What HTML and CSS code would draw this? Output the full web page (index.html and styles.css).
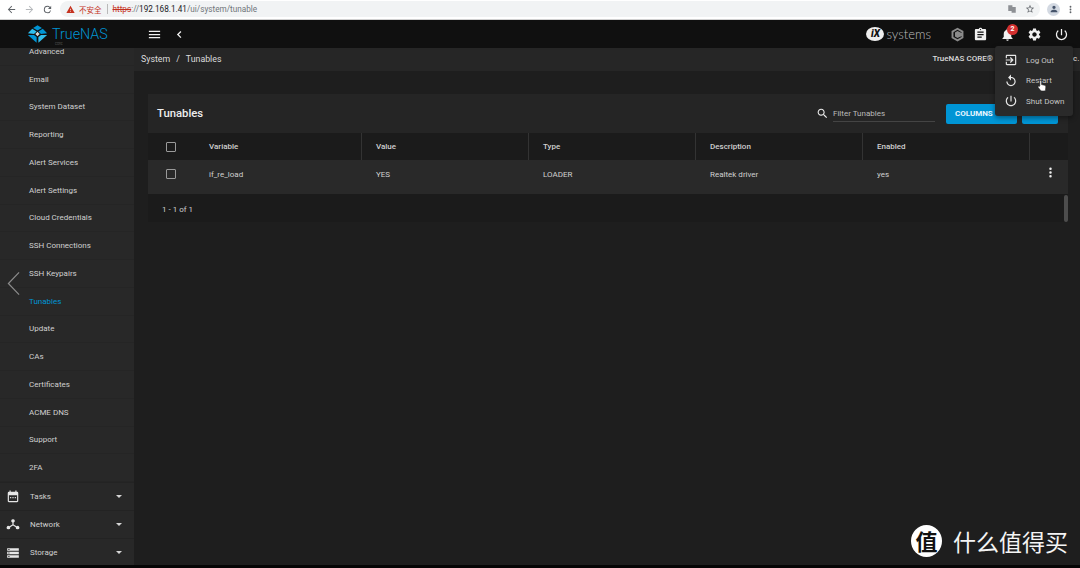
FILE: index.html
```html
<!DOCTYPE html>
<html>
    <head>
        <title>TrueNAS - Tunables</title>
        <link rel="stylesheet" href="styles.css">
    </head>
    <body>
        <div class="chrome">
            <svg class="chrome-ico" viewBox="0 0 24 24"><path d="M20 11H7.8l5.6-5.6L12 4l-8 8 8 8 1.4-1.4L7.8 13H20z"/></svg>
            <svg class="chrome-ico faded" viewBox="0 0 24 24"><path d="M4 11h12.2l-5.6-5.6L12 4l8 8-8 8-1.400-1.400 5.600-5.600H4z"/></svg>
            <svg class="chrome-ico" viewBox="0 0 24 24"><path d="M17.65 6.35A7.96 7.96 0 0 0 12 4a8 8 0 1 0 7.73 10h-2.08A6 6 0 1 1 12 6c1.66 0 3.14.69 4.22 1.78L13 11h7V4z"/></svg>
            <div class="omnibox">
                <svg class="warn" viewBox="0 0 24 24"><path d="M1 21h22L12 2zm12-3h-2v-2h2zm0-4h-2v-4h2z"/></svg>
                <span class="insecure">不安全</span>
                <span class="omni-sep"></span>
                <span class="url"><s class="https">https</s><span class="url-dim">://</span>192.168.1.41<span class="url-dim">/ui/system/tunable</span></span>
                <span class="grow"></span>
                <svg class="omni-ico" viewBox="0 0 24 24"><path d="M3 3h10v14H3zm8 4h10v14H11z" fill="#8d9094"/></svg>
                <svg class="omni-ico" viewBox="0 0 24 24"><path d="M12 15.4l-3.8 2.3 1-4.3-3.3-2.9 4.4-.4L12 6.100l1.700 4 4.400.4-3.300 2.900 1 4.300zM22 9.200l-7.200-.6L12 2 9.200 8.600 2 9.200l5.500 4.700L5.800 21l6.200-3.700 6.200 3.700-1.600-7.100z"/></svg>
            </div>
            <div class="avatar"><svg viewBox="0 0 24 24"><path d="M12 12a4 4 0 1 0 0-8 4 4 0 0 0 0 8zm0 2c-2.700 0-8 1.300-8 4v2h16v-2c0-2.700-5.300-4-8-4z"/></svg></div>
            <svg class="chrome-ico last" viewBox="0 0 24 24"><path d="M12 8a2 2 0 1 0 0-4 2 2 0 0 0 0 4zm0 2a2 2 0 1 0 0 4 2 2 0 0 0 0-4zm0 6a2 2 0 1 0 0 4 2 2 0 0 0 0-4z"/></svg>
        </div>

        <header class="topbar">
            <div class="brand">
                <svg class="brand-mark" viewBox="0 0 24 20"><path d="M12 0l5 3-5 3-5-3z" fill="#0095d5"/><path d="M6 4l5 3-3 3-7-1z" fill="#31beec"/><path d="M18 4l-5 3 3 3 7-1z" fill="#0095d5"/><path d="M12 7.500l2.500 2.500-2.500 2.500L9.500 10z" fill="#d8d8d8"/><path d="M1 11l7 0 3 2.500V20z" fill="#0095d5"/><path d="M23 11l-7 0-3 2.500V20z" fill="#31beec"/></svg>
                <span class="brand-name">TrueNAS<small>CORE</small></span>
            </div>
            <svg class="bar-ico menu-ico" viewBox="0 0 24 24"><path d="M3 18h18v-2H3zm0-5h18v-2H3zm0-7v2h18V6z"/></svg>
            <svg class="bar-ico back-ico" viewBox="0 0 24 24"><path d="M17 5l-2.500-2.500L5 12l9.500 9.500L17 19l-7-7z"/></svg>
            <span class="grow"></span>
            <div class="ix"><span class="ix-badge">iX</span><span class="ix-name">systems</span></div>
            <svg class="bar-ico tn-ico" viewBox="0 0 24 24"><path d="M12 1l9.500 5.500v11L12 23l-9.500-5.500v-11zm0 3.500L5.500 8.200v7.600l6.500 3.700 6.500-3.700v-1.500L12 17.500l-4-2.300V8.800l4-2.300 6.500 3.200V8.200z" fill="#8a8a8a"/><path d="M9 10h9v1.800H9zm0 3h9v1.800H9z" fill="#8a8a8a"/></svg>
            <svg class="bar-ico clip-ico" viewBox="0 0 24 24"><path d="M19 3h-4.180C14.400 1.840 13.300 1 12 1c-1.300 0-2.400.84-2.820 2H5c-1.100 0-2 .9-2 2v14c0 1.100.9 2 2 2h14c1.100 0 2-.9 2-2V5c0-1.100-.9-2-2-2zm-7 0c.55 0 1 .45 1 1s-.45 1-1 1-1-.45-1-1 .45-1 1-1zm2 14H7v-2h7v2zm3-4H7v-2h10v2zm0-4H7V7h10v2z"/></svg>
            <div class="bell">
                <svg class="bar-ico" viewBox="0 0 24 24"><path d="M12 22c1.100 0 2-.9 2-2h-4c0 1.100.89 2 2 2zm6-6v-5c0-3.070-1.640-5.640-4.500-6.320V4c0-.83-.67-1.500-1.500-1.500s-1.500.67-1.500 1.500v.68C7.630 5.360 6 7.920 6 11v5l-2 2v1h16v-1l-2-2z"/></svg>
                <span class="badge">2</span>
            </div>
            <svg class="bar-ico gear-ico" viewBox="0 0 24 24"><path d="M19.140 12.940c.04-.3.06-.61.06-.94 0-.32-.02-.64-.07-.94l2.030-1.580c.18-.14.23-.41.12-.61l-1.920-3.320c-.12-.22-.37-.29-.59-.22l-2.390.96c-.5-.38-1.030-.7-1.620-.94l-.36-2.540c-.04-.24-.24-.41-.48-.41h-3.840c-.24 0-.43.17-.47.41l-.36 2.540c-.59.24-1.130.57-1.620.94l-2.390-.96c-.22-.08-.47 0-.59.22L2.740 8.870c-.12.21-.08.47.12.61l2.030 1.580c-.05.3-.09.63-.09.94s.02.64.07.94l-2.030 1.580c-.18.14-.23.41-.12.61l1.920 3.320c.12.22.37.29.59.22l2.390-.96c.5.38 1.030.7 1.620.94l.36 2.540c.05.24.24.41.48.41h3.840c.24 0 .44-.17.47-.41l.36-2.540c.59-.24 1.130-.56 1.620-.94l2.390.96c.22.08.47 0 .59-.22l1.920-3.320c.12-.22.07-.47-.12-.61l-2.010-1.580zM12 15.600c-1.980 0-3.600-1.620-3.600-3.600s1.620-3.600 3.600-3.600 3.600 1.620 3.600 3.600-1.620 3.600-3.600 3.600z"/></svg>
            <svg class="bar-ico power-ico" viewBox="0 0 24 24"><path d="M13 3h-2v10h2V3zm4.830 2.170l-1.420 1.420C17.990 7.860 19 9.810 19 12c0 3.870-3.130 7-7 7s-7-3.130-7-7c0-2.190 1.010-4.140 2.580-5.420L6.170 5.170C4.230 6.820 3 9.260 3 12c0 4.970 4.030 9 9 9s9-4.030 9-9c0-2.740-1.230-5.180-3.170-6.830z"/></svg>
        </header>

        <div class="app">
            <nav class="sidebar">
                <div class="sub-list">
                    <a class="sub-item">Advanced</a>
                    <a class="sub-item">Email</a>
                    <a class="sub-item">System Dataset</a>
                    <a class="sub-item">Reporting</a>
                    <a class="sub-item">Alert Services</a>
                    <a class="sub-item">Alert Settings</a>
                    <a class="sub-item">Cloud Credentials</a>
                    <a class="sub-item">SSH Connections</a>
                    <a class="sub-item">SSH Keypairs</a>
                    <a class="sub-item active">Tunables</a>
                    <a class="sub-item">Update</a>
                    <a class="sub-item">CAs</a>
                    <a class="sub-item">Certificates</a>
                    <a class="sub-item">ACME DNS</a>
                    <a class="sub-item">Support</a>
                    <a class="sub-item">2FA</a>
                </div>
                <a class="nav-item">
                    <svg class="nav-ico" viewBox="0 0 24 24"><path d="M19 3h-1V1h-2v2H8V1H6v2H5a2 2 0 0 0-2 2v14c0 1.100.9 2 2 2h14c1.100 0 2-.9 2-2V5a2 2 0 0 0-2-2zm0 16H5V9h14zM7 12h2v2H7zm4 0h2v2h-2zm4 0h2v2h-2z"/></svg>
                    <span class="grow">Tasks</span><span class="caret"></span>
                </a>
                <a class="nav-item">
                    <svg class="nav-ico" viewBox="0 0 24 24"><path d="M12 2a3 3 0 0 1 1 5.830V11l5 3.100a3 3 0 1 1-1.100 1.700L12 12.800l-4.900 3a3 3 0 1 1-1.100-1.700l5-3.100V7.830A3 3 0 0 1 12 2z"/></svg>
                    <span class="grow">Network</span><span class="caret"></span>
                </a>
                <a class="nav-item">
                    <svg class="nav-ico" viewBox="0 0 24 24"><path d="M2 20h20v-4H2zm2-3h2v2H4zM2 4v4h20V4zm4 3H4V5h2zm-4 7h20v-4H2zm2-3h2v2H4z"/></svg>
                    <span class="grow">Storage</span><span class="caret"></span>
                </a>
            </nav>

            <main class="content">
                <div class="crumbs">
                    <span>System</span><span class="crumb-sep">/</span><span>Tunables</span>
                    <span class="grow"></span>
                    <span class="version">TrueNAS CORE®</span>
                    <span class="version-end">c.</span>
                </div>
                <section class="card">
                    <div class="card-head">
                        <h2>Tunables</h2>
                        <span class="grow"></span>
                        <svg class="search-ico" viewBox="0 0 24 24"><path d="M15.500 14h-.79l-.28-.27C15.410 12.590 16 11.110 16 9.500 16 5.910 13.090 3 9.500 3S3 5.910 3 9.500 5.910 16 9.500 16c1.610 0 3.090-.59 4.230-1.570l.27.28v.79l5 4.990L20.490 19l-4.990-5zm-6 0C7.010 14 5 11.990 5 9.500S7.010 5 9.500 5 14 7.010 14 9.500 11.990 14 9.500 14z"/></svg>
                        <div class="filter">Filter Tunables</div>
                        <button class="btn btn-columns">COLUMNS</button>
                        <button class="btn btn-add"></button>
                    </div>
                    <div class="t-row t-head">
                        <div class="c-check"><span class="checkbox"></span></div>
                        <div class="cell">Variable</div>
                        <div class="cell">Value</div>
                        <div class="cell">Type</div>
                        <div class="cell">Description</div>
                        <div class="cell">Enabled</div>
                        <div class="c-actions"></div>
                    </div>
                    <div class="t-row t-body">
                        <div class="c-check"><span class="checkbox"></span></div>
                        <div class="cell">if_re_load</div>
                        <div class="cell">YES</div>
                        <div class="cell">LOADER</div>
                        <div class="cell">Realtek driver</div>
                        <div class="cell">yes</div>
                        <div class="c-actions"><svg class="more-ico" viewBox="0 0 24 24"><path d="M12 8a2 2 0 1 0 0-4 2 2 0 0 0 0 4zm0 2a2 2 0 1 0 0 4 2 2 0 0 0 0-4zm0 6a2 2 0 1 0 0 4 2 2 0 0 0 0-4z"/></svg></div>
                    </div>
                    <div class="t-foot">1 - 1 of 1<span class="scroll-thumb"></span></div>
                </section>
            </main>
        </div>
        <div class="bottom-strip"></div>

        <!-- things floating over the page -->
        <div class="power-menu">
            <div class="menu-row">
                <svg viewBox="0 0 24 24"><path d="M10.090 15.590L11.500 17l5-5-5-5-1.410 1.410L12.670 11H3v2h9.670l-2.580 2.590zM19 3H5c-1.110 0-2 .9-2 2v4h2V5h14v14H5v-4H3v4c0 1.100.89 2 2 2h14c1.100 0 2-.9 2-2V5c0-1.100-.9-2-2-2z"/></svg>
                Log Out
            </div>
            <div class="menu-row">
                <svg viewBox="0 0 24 24"><path d="M12 5V1L7 6l5 5V7c3.310 0 6 2.690 6 6s-2.690 6-6 6-6-2.690-6-6H4c0 4.420 3.580 8 8 8s8-3.580 8-8-3.580-8-8-8z"/></svg>
                Restart
            </div>
            <div class="menu-row">
                <svg viewBox="0 0 24 24"><path d="M13 3h-2v10h2V3zm4.830 2.170l-1.420 1.420C17.990 7.860 19 9.810 19 12c0 3.870-3.130 7-7 7s-7-3.130-7-7c0-2.190 1.010-4.140 2.580-5.420L6.170 5.170C4.230 6.820 3 9.260 3 12c0 4.970 4.030 9 9 9s9-4.030 9-9c0-2.740-1.230-5.180-3.170-6.830z"/></svg>
                Shut Down
            </div>
        </div>
        <svg class="hand" viewBox="0 0 14 18"><path d="M4 9V2.500a1.200 1.200 0 0 1 2.400 0V7l4 .9c1.300.3 2 1.100 2 2.300l-.5 4.300c-.1 1-.8 1.500-1.700 1.500H6.500c-.7 0-1.200-.3-1.600-.9L1.500 10.800c-.6-1 .7-2.200 1.700-1.200z" fill="#fff" stroke="#222" stroke-width=".8"/></svg>
        <svg class="slide-arrow" viewBox="0 0 14 26"><path d="M13 1L1.500 13 13 25" fill="none" stroke="#8c8c8c" stroke-width="1.300"/></svg>
        <div class="watermark">
            <span class="wm-badge">值</span>
            <span class="wm-text">什么值得买</span>
        </div>
    </body>
</html>
```
FILE: styles.css
```css
html, body{
    margin:0;
    padding:0;
    height:568px;
    overflow:hidden;
}
body{
    position:relative;
    display:flex;
    flex-direction:column;
    font-family:Roboto, sans-serif;
    font-size:8px;
    color:#d0d0d0;
    background-color:#1e1e1e;
}
.grow{
    flex:1;
}

/* browser toolbar */
.chrome{
    display:flex;
    align-items:center;
    height:20px;
    padding:0 4px 1px 6px;
    box-sizing:border-box;
    background-color:#fff;
    border-bottom:1px solid #d0d0d0;
}
.chrome-ico{
    width:11px;
    height:11px;
    margin-right:7px;
    fill:#5f6368;
}
.chrome-ico.faded{
    fill:#b5b8bb;
}
.chrome-ico.last{
    margin:0 0 0 5px;
}
.omnibox{
    display:flex;
    align-items:center;
    flex:1;
    height:16px;
    padding:0 5px 0 6px;
    border-radius:8px;
    background-color:#f1f3f4;
    font-size:8.2px;
    color:#202124;
}
.warn{
    width:9px;
    height:9px;
    fill:#c5321f;
}
.insecure{
    margin-left:4px;
    color:#c5321f;
    font-family:"Noto Sans CJK SC", sans-serif;
    font-size:7.5px;
}
.omni-sep{
    width:1px;
    height:10px;
    margin:0 5px;
    background-color:#b9b9b9;
}
.https{
    color:#c5321f;
}
.url-dim{
    color:#70757a;
}
.omni-ico{
    width:10px;
    height:10px;
    margin-left:8px;
    fill:#5f6368;
}
.avatar{
    display:flex;
    align-items:center;
    justify-content:center;
    width:13px;
    height:13px;
    margin-left:7px;
    border-radius:50%;
    background-color:#d3d9e2;
}
.avatar svg{
    width:10px;
    height:10px;
    fill:#45536a;
}

/* truenas top bar */
.topbar{
    display:flex;
    align-items:center;
    height:28px;
    padding-right:11px;
    box-sizing:border-box;
    background-color:#101010;
}
.brand{
    display:flex;
    align-items:center;
    width:134px;
    padding-left:27px;
    box-sizing:border-box;
}
.brand-mark{
    width:21px;
    height:18px;
}
.brand-name{
    position:relative;
    margin-left:4px;
    font-size:14.3px;
    font-weight:300;
    color:#0095d5;
}
.brand-name small{
    position:absolute;
    left:3px;
    top:16px;
    font-size:3px;
    color:#777;
}
.bar-ico{
    display:block;
    width:15px;
    height:15px;
    fill:#f0f0f0;
}
.menu-ico{
    margin-left:13px;
}
.back-ico{
    width:9px;
    height:9px;
    margin-left:13px;
}
.ix{
    display:flex;
    align-items:center;
    margin-right:19px;
}
.ix-badge{
    width:18px;
    height:14px;
    border-radius:50%;
    background-color:#eee;
    color:#101010;
    font-size:10px;
    font-weight:900;
    font-style:italic;
    line-height:14px;
    text-align:center;
}
.ix-name{
    margin-left:2px;
    font-family:Lato, sans-serif;
    font-size:13px;
    font-weight:300;
    color:#bdbdbd;
}
.tn-ico{
    margin-right:8px;
}
.clip-ico{
    margin-right:12px;
}
.bell{
    position:relative;
    margin-right:12px;
}
.badge{
    position:absolute;
    top:-3px;
    left:7px;
    width:11px;
    height:11px;
    border-radius:50%;
    background-color:#d32f2f;
    color:#fff;
    font-size:7px;
    font-weight:700;
    line-height:11px;
    text-align:center;
}
.gear-ico{
    margin-right:12px;
}

/* sidebar + content */
.app{
    display:flex;
    height:517px;
}
.sidebar{
    display:flex;
    flex-direction:column;
    width:134px;
    flex:none;
    overflow:hidden;
    background-color:#282828;
}
.sub-list{
    margin-top:-10px;
}
.sub-item{
    display:flex;
    align-items:center;
    height:27.75px;
    padding-left:29px;
    box-sizing:border-box;
    border-bottom:1px solid #252525;
}
.sub-item.active{
    color:#0095d5;
}
.nav-item{
    display:flex;
    align-items:center;
    flex:none;
    height:28px;
    padding:0 12px 0 6px;
    box-sizing:border-box;
    border-top:1px solid #232323;
}
.nav-ico{
    width:14px;
    height:14px;
    margin-right:10px;
    fill:#e6e6e6;
}
.caret{
    width:0;
    height:0;
    border-left:3.5px solid transparent;
    border-right:3.5px solid transparent;
    border-top:3.5px solid #d6d6d6;
}
.content{
    flex:1;
    min-width:0;
}
.crumbs{
    display:flex;
    align-items:center;
    height:23px;
    padding:0 0 2px 7px;
    box-sizing:border-box;
    background-color:#262626;
    font-size:8.8px;
    color:#dcdcdc;
}
.crumb-sep{
    margin:0 6px;
}
.version{
    font-size:8px;
    font-weight:500;
}
.version-end{
    width:7px;
    margin-left:80px;
    overflow:hidden;
    font-size:8px;
    font-weight:500;
}

/* table card */
.card{
    width:920px;
    margin:23px 0 0 14px;
    background-color:#252525;
}
.card-head{
    display:flex;
    align-items:center;
    height:39px;
    padding:0 10px 0 9px;
}
.card-head h2{
    margin:0;
    font-size:11.3px;
    font-weight:500;
    color:#eee;
}
.search-ico{
    width:13px;
    height:13px;
    margin-right:4px;
    fill:#eee;
}
.filter{
    width:102px;
    height:17px;
    margin-right:11px;
    line-height:17px;
    color:#bbb;
    border-bottom:1px solid #444;
    box-sizing:border-box;
}
.btn{
    display:block;
    height:20px;
    padding:0;
    border:0;
    border-radius:2px;
    background-color:#0095d5;
    color:#e8f6ff;
    font-family:inherit;
    font-size:8px;
    font-weight:700;
    text-align:left;
}
.btn-columns{
    width:71px;
    padding-left:9px;
}
.btn-add{
    width:36px;
    margin-left:5px;
}
.t-row{
    display:flex;
    align-items:center;
}
.t-head{
    height:27px;
    background-color:#1b1b1b;
    font-weight:500;
}
.t-body{
    height:34px;
    padding-bottom:6px;
    box-sizing:border-box;
    background-color:#292929;
}
.c-check{
    display:flex;
    align-items:center;
    width:47px;
    padding-left:18px;
    box-sizing:border-box;
}
.checkbox{
    width:8px;
    height:8px;
    border:1px solid #9a9a9a;
    border-radius:1px;
}
.cell{
    display:flex;
    align-items:center;
    width:167px;
    height:100%;
    padding-left:14px;
    box-sizing:border-box;
}
.t-head .cell{
    border-right:1px solid #333;
}
.c-actions{
    display:flex;
    justify-content:flex-end;
    flex:1;
    padding:0 10px 3px 0;
}
.more-ico{
    width:15px;
    height:15px;
    fill:#eee;
}
.t-foot{
    position:relative;
    display:flex;
    align-items:center;
    height:28px;
    padding:2px 0 0 14px;
    box-sizing:border-box;
    background-color:#1b1b1b;
}
.scroll-thumb{
    position:absolute;
    right:0;
    top:1px;
    width:4px;
    height:27px;
    border-radius:2px;
    background-color:#4d4d4d;
}
.bottom-strip{
    height:3px;
    background-color:#050505;
}

/* power dropdown */
.power-menu{
    position:absolute;
    left:995px;
    top:46px;
    width:78px;
    height:70px;
    padding-top:4px;
    box-sizing:border-box;
    border-radius:3px;
    background-color:#2a2a2a;
    box-shadow:0 2px 5px rgba(0,0,0,.4);
}
.menu-row{
    display:flex;
    align-items:center;
    height:20.5px;
    padding-left:9px;
    color:#c4c4c4;
}
.menu-row svg{
    width:14px;
    height:14px;
    margin-right:8px;
    fill:#e8e8e8;
}
.hand{
    position:absolute;
    left:1037px;
    top:79px;
    width:10px;
    height:14px;
}
.slide-arrow{
    position:absolute;
    left:7px;
    top:271px;
    width:13px;
    height:25px;
}
.watermark{
    position:absolute;
    left:911px;
    top:525px;
    display:flex;
    align-items:center;
}
.wm-badge{
    width:31px;
    height:32px;
    border-radius:50%;
    background-color:#fff;
    color:#111;
    font-family:"Noto Sans CJK SC", sans-serif;
    font-size:22px;
    font-weight:700;
    line-height:31px;
    text-align:center;
}
.wm-text{
    margin-left:11px;
    font-family:"Noto Sans CJK SC", sans-serif;
    font-size:23px;
    line-height:32px;
    color:#f4f4f4;
}
```
